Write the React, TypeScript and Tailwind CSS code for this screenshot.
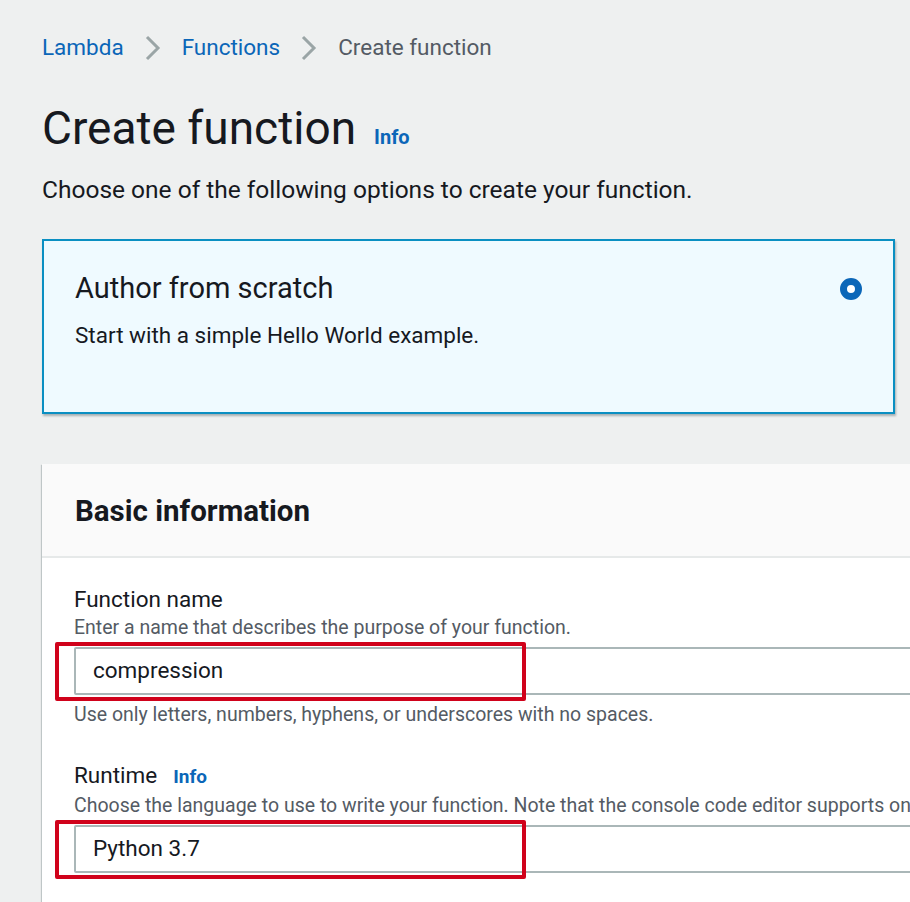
import React from 'react';

const font = {fontFamily: 'Roboto, "Open Sans", sans-serif'};

function Chevron() {
    return (
        <svg width="16" height="26" viewBox="0 0 16 26" className="shrink-0" aria-hidden="true">
            <path d="M2 2 L13 13 L2 24" fill="none" stroke="#9aa5a6" strokeWidth="3"/>
        </svg>
    );
}

function Field({label, info, hint, value, note}: {label: string; info?: boolean; hint: string; value: string; note?: string}) {
    return (
        <div>
            <div className="flex items-baseline gap-[16px] text-[22.5px] leading-[28px] text-[#16191f]">
                {label}
                {info ? <span className="text-[19px] font-bold text-[#0b66b8]">Info</span> : null}
            </div>
            <div className="mt-[3px] whitespace-nowrap text-[19.5px] leading-[24px] text-[#545b64]">{hint}</div>
            <div className="relative mt-[7px]">
                <div
                    className="flex h-[48px] items-center rounded-[2px] border-2 border-[#aab7b8] bg-white pl-[17px] text-[22.5px] text-[#16191f]">
                    {value}
                </div>
                <div className="pointer-events-none absolute left-[-19px] top-[-5px] h-[59px] w-[471px] rounded-[2px] border-4 border-[#d0021b]"/>
            </div>
            {note ? <div className="mt-[8px] whitespace-nowrap text-[19.5px] leading-[24px] text-[#545b64]">{note}</div> : null}
        </div>
    );
}

export default function App() {
    return (
        <div className="min-h-screen w-[910px] overflow-hidden bg-[#eef0f0]" style={font}>
            <div className="w-[1800px] pl-[42px]">
                <nav className="mt-[33px] flex h-[30px] items-center text-[22.5px]">
                    <span className="text-[#0b66b8]">Lambda</span>
                    <span className="mx-[21px]"><Chevron/></span>
                    <span className="text-[#0b66b8]">Functions</span>
                    <span className="mx-[21px]"><Chevron/></span>
                    <span className="text-[#545b64]">Create function</span>
                </nav>

                <div className="mt-[37px] flex items-baseline gap-[18px]">
                    <h1 className="text-[46px] leading-[56px] font-normal text-[#16191f]">Create function</h1>
                    <span className="text-[20px] font-bold text-[#0b66b8]">Info</span>
                </div>

                <p className="mt-[19px] text-[24.5px] leading-[30px] text-[#16191f]">
                    Choose one of the following options to create your function.
                </p>

                <div className="mt-[34px] flex gap-[20px]">
                    <div
                        className="flex h-[175px] w-[853px] justify-between border-2 border-[#0a8fc2] bg-[#effaff] pl-[31px] pr-[31px] pt-[29px] shadow-[1px_2px_2px_rgba(0,28,36,0.3)]">
                        <div>
                            <div className="text-[29px] leading-[36px] text-[#16191f]">Author from scratch</div>
                            <div className="mt-[15px] text-[22.5px] leading-[28px] text-[#16191f]">Start with a simple Hello World example.</div>
                        </div>
                        <div className="mt-[8px] h-[22px] w-[22px] rounded-full border-[7px] border-[#0b66b8] bg-white"/>
                    </div>
                </div>

                <section
                    className="mt-[50px] w-[1700px] bg-white shadow-[0_1px_1px_rgba(0,28,36,0.3),-1px_1px_1px_rgba(0,28,36,0.15)]">
                    <div className="border-b-2 border-[#e6e9e9] bg-[#fafafa] pb-[27px] pl-[33px] pt-[29px]">
                        <h2 className="text-[29.5px] font-bold leading-[36px] text-[#16191f]">Basic information</h2>
                    </div>
                    <div className="flex flex-col gap-[34px] pb-[40px] pl-[32px] pt-[27px]">
                        <Field
                            label="Function name"
                            hint="Enter a name that describes the purpose of your function."
                            value="compression"
                            note="Use only letters, numbers, hyphens, or underscores with no spaces."
                        />
                        <Field
                            label="Runtime"
                            info
                            hint="Choose the language to use to write your function. Note that the console code editor supports only Node.js, Python, and Ruby."
                            value="Python 3.7"
                        />
                    </div>
                </section>
            </div>
        </div>
    );
}
